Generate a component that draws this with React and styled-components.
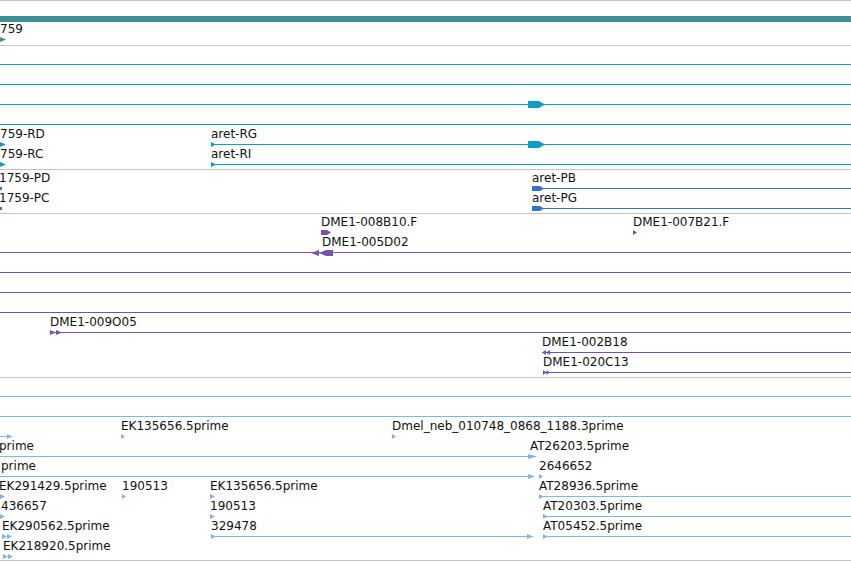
import React from "react";
import styled, { createGlobalStyle } from "styled-components";

const ROW = 20;

const GlobalStyle = createGlobalStyle`
  html, body {
    margin: 0;
    padding: 0;
    background: #fff;
    overflow: hidden;
  }
  body {
    font-family: "DejaVu Sans", "Liberation Sans", sans-serif;
  }
`;

const Browser = styled.div`
  width: 851px;
  height: 561px;
  overflow: hidden;
  background: #fff;
  display: flex;
  flex-direction: column;
`;

const Track = styled.div`
  position: relative;
  flex: none;
  height: ${(p) => p.$rows * ROW}px;
  padding-bottom: ${(p) => p.$pad}px;
  border-top: 1px solid #c4c4c4;
  overflow: hidden;
`;

const Label = styled.span`
  position: absolute;
  left: ${(p) => p.$x}px;
  top: ${(p) => p.$row * ROW + 1}px;
  font-size: 12px;
  line-height: 14px;
  color: #111;
  white-space: nowrap;
`;

const Line = styled.div`
  position: absolute;
  left: ${(p) => p.$x1}px;
  width: ${(p) => p.$x2 - p.$x1}px;
  top: ${(p) => p.$row * ROW + 18}px;
  height: 1px;
  background: ${(p) => p.$color};
`;

const Bar = styled.div`
  position: absolute;
  left: ${(p) => p.$x1}px;
  width: ${(p) => p.$x2 - p.$x1}px;
  top: ${(p) => p.$row * ROW + 15}px;
  height: 6px;
  background: ${(p) => p.$color};
`;

const Mark = styled.svg`
  position: absolute;
  left: ${(p) => p.$x}px;
  top: ${(p) => p.$row * ROW + 18.5 - p.$h / 2}px;
  display: block;
`;

// glyph outlines, drawn in a w x h box
const shapes = {
  tip: { w: 5, h: 5, d: "M0 0L5 2.5L0 5Z" },
  tipL: { w: 5, h: 5, d: "M5 0L0 2.5L5 5Z" },
  dot: { w: 2, h: 3, d: "M0 0H2V3H0Z" },
  twin: { w: 10, h: 5, d: "M0 0L5 2.5L0 5Z M5 0L10 2.5L5 5Z" },
  twinL: { w: 10, h: 5, d: "M10 0L5 2.5L10 5Z M5 0L0 2.5L5 5Z" },
  cds: { w: 17, h: 7, d: "M0 0H11L17 3.5L11 7H0Z" },
  box: { w: 12, h: 5, d: "M0 0H8L12 2.5L8 5H0Z" },
  boxS: { w: 10, h: 5, d: "M0 0H6L10 2.5L6 5H0Z" },
  twinBoxL: { w: 22, h: 6, d: "M0 3L8 0V6Z M8 3L15 0H22V6H15Z" },
};

const FULL = [0, 851];

const tracks = [
  {
    color: "#418f93",
    rows: 2,
    pad: 4,
    items: [
      { row: 0, bar: FULL },
      { row: 1, label: "759", lx: 0, marks: [["tip", 0, 6]] },
    ],
  },
  {
    color: "#0e9ec0",
    rows: 6,
    pad: 3,
    items: [
      { row: 0, line: FULL },
      { row: 1, line: FULL },
      { row: 2, line: FULL, marks: [["cds", 528]] },
      { row: 3, line: FULL },
      { row: 4, label: "759-RD", lx: 0, marks: [["tip", 0, 6]] },
      { row: 4, label: "aret-RG", lx: 211, line: [211, 851], marks: [["tip", 211], ["cds", 528]] },
      { row: 5, label: "759-RC", lx: 0, marks: [["tip", 0, 6]] },
      { row: 5, label: "aret-RI", lx: 211, line: [211, 851], marks: [["tip", 211]] },
    ],
  },
  {
    color: "#3173d1",
    rows: 2,
    pad: 3,
    items: [
      { row: 0, label: "1759-PD", lx: -1, marks: [["dot", 0]] },
      { row: 0, label: "aret-PB", lx: 532, line: [532, 851], marks: [["box", 532]] },
      { row: 1, label: "1759-PC", lx: -1, marks: [["dot", 0]] },
      { row: 1, label: "aret-PG", lx: 532, line: [532, 851], marks: [["box", 532]] },
    ],
  },
  {
    color: "#7553ad",
    rows: 8,
    pad: 3,
    items: [
      { row: 0, label: "DME1-008B10.F", lx: 321, marks: [["boxS", 321]] },
      { row: 0, label: "DME1-007B21.F", lx: 633, marks: [["tip", 633, 4]] },
      { row: 1, label: "DME1-005D02", lx: 322, line: FULL, marks: [["twinBoxL", 311]] },
      { row: 2, line: FULL },
      { row: 3, line: FULL },
      { row: 4, line: FULL },
      { row: 5, label: "DME1-009O05", lx: 50, line: [50, 851], marks: [["twin", 50, 12]] },
      { row: 6, label: "DME1-002B18", lx: 542, line: [542, 851], marks: [["twinL", 542, 8]] },
      { row: 7, label: "DME1-020C13", lx: 543, line: [543, 851], marks: [["twin", 543, 7]] },
    ],
  },
  {
    color: "#7fb6e3",
    rows: 9,
    pad: 2,
    items: [
      { row: 0, line: FULL },
      { row: 1, line: FULL },
      { row: 2, line: [0, 12], marks: [["tip", 7]] },
      { row: 2, label: "EK135656.5prime", lx: 121, marks: [["tip", 121, 4]] },
      { row: 2, label: "Dmel_neb_010748_0868_1188.3prime", lx: 392, marks: [["tip", 392, 4]] },
      { row: 3, label: "prime", lx: -1, line: [0, 536], marks: [["tip", 528, 9]] },
      { row: 3, label: "AT26203.5prime", lx: 530 },
      { row: 4, label: "prime", lx: 1, line: [0, 534], marks: [["tip", 528, 7]] },
      { row: 4, label: "2646652", lx: 539, marks: [["tip", 539, 4]] },
      { row: 5, label: "EK291429.5prime", lx: -1, marks: [["tip", 0]] },
      { row: 5, label: "190513", lx: 122, marks: [["tip", 122, 4]] },
      { row: 5, label: "EK135656.5prime", lx: 210, marks: [["tip", 210]] },
      { row: 5, label: "AT28936.5prime", lx: 539, line: [539, 851], marks: [["tip", 539]] },
      { row: 6, label: "436657", lx: 1, marks: [["tip", 0]] },
      { row: 6, label: "190513", lx: 210, marks: [["tip", 210]] },
      { row: 6, label: "AT20303.5prime", lx: 543, line: [543, 851], marks: [["tip", 543]] },
      { row: 7, label: "EK290562.5prime", lx: 2, marks: [["twin", 2]] },
      { row: 7, label: "329478", lx: 211, line: [211, 533], marks: [["tip", 211], ["tip", 527, 6]] },
      { row: 7, label: "AT05452.5prime", lx: 543, line: [543, 851], marks: [["tip", 543]] },
      { row: 8, label: "EK218920.5prime", lx: 3, marks: [["twin", 3]] },
    ],
  },
  { color: "#c4c4c4", rows: 0, pad: 0, items: [] },
];

const Glyph = ({ kind, x, w, row, color }) => {
  const s = shapes[kind];
  const width = w || s.w;
  return (
    <Mark
      $x={x}
      $row={row}
      $h={s.h}
      width={width}
      height={s.h}
      viewBox={`0 0 ${s.w} ${s.h}`}
      preserveAspectRatio="none"
    >
      <path d={s.d} fill={color} />
    </Mark>
  );
};

const Feature = ({ item, color }) => {
  const { row, label, lx, line, bar, marks = [] } = item;
  return (
    <>
      {bar && <Bar $row={row} $x1={bar[0]} $x2={bar[1]} $color={color} />}
      {line && <Line $row={row} $x1={line[0]} $x2={line[1]} $color={color} />}
      {marks.map(([kind, x, w], i) => (
        <Glyph key={i} kind={kind} x={x} w={w} row={row} color={color} />
      ))}
      {label && (
        <Label $row={row} $x={lx}>
          {label}
        </Label>
      )}
    </>
  );
};

export default function App() {
  return (
    <>
      <GlobalStyle />
      <Browser>
        {tracks.map((t, ti) => (
          <Track key={ti} $rows={t.rows} $pad={t.pad}>
            {t.items.map((item, i) => (
              <Feature key={i} item={item} color={t.color} />
            ))}
          </Track>
        ))}
      </Browser>
    </>
  );
}
